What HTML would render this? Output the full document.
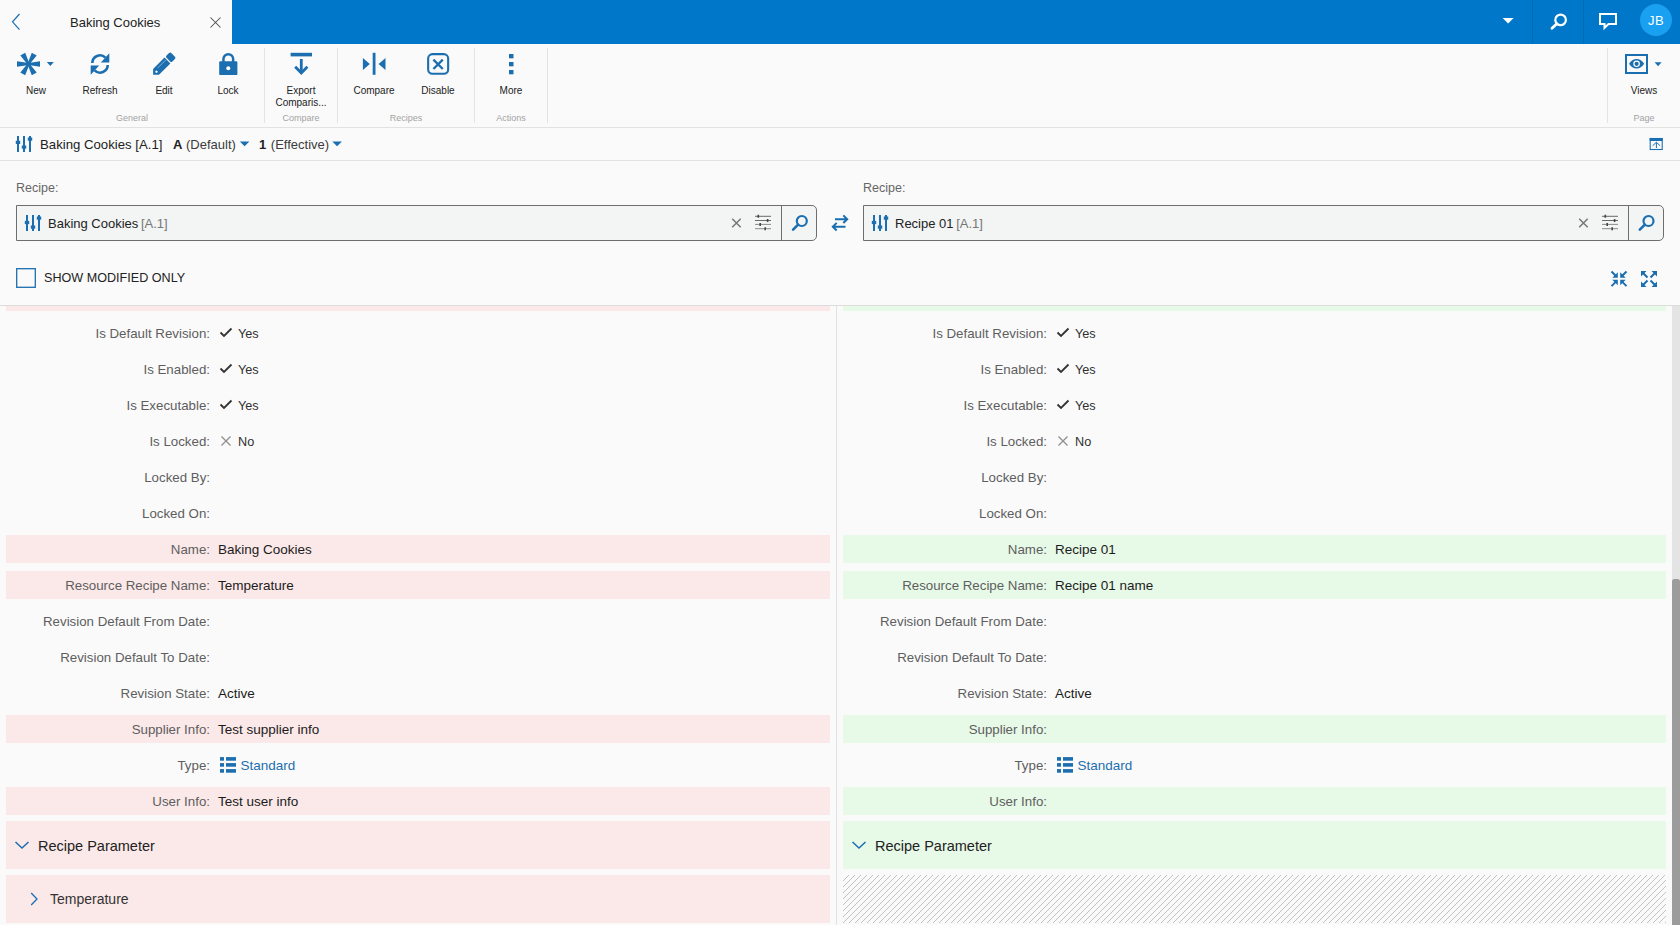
<!DOCTYPE html>
<html><head><meta charset="utf-8">
<style>
*{box-sizing:border-box;margin:0;padding:0}
html,body{width:1680px;height:925px;overflow:hidden;background:#fafafa;font-family:"Liberation Sans",sans-serif;color:#222}
.a{position:absolute}
.t{position:absolute;white-space:nowrap}
svg{position:absolute;overflow:visible}
#hdr{left:232px;top:0;width:1448px;height:44px;background:#0077c8}
.tbl{font-size:10px;color:#222;text-align:center;line-height:12px;padding-top:0.7px}
.grp{font-size:9px;color:#a3a3a3;text-align:center;line-height:10px;padding-top:1px}
.sep{width:1px;background:#e3e3e3;top:48px;height:75px}
.lbl{font-size:13.3px;color:#5e5e5e;text-align:right;line-height:16px;padding-top:0.7px}
.val{font-size:13.5px;color:#1c1c1c;line-height:16px}
.pink{background:#fbe8e8}
.green{background:#e7f9e7}
</style></head><body>

<!-- tab -->
<svg style="left:0;top:0" width="40" height="44"><path d="M19.5 14 L12.5 21.8 L19.5 29.6" fill="none" stroke="#1b6eb0" stroke-width="1.2"/></svg>
<div class="t" style="left:70px;top:14.5px;font-size:13px;line-height:16px;color:#222">Baking Cookies</div>
<svg style="left:0;top:0" width="232" height="44"><path d="M210.5 17.5 L220.5 27.5 M220.5 17.5 L210.5 27.5" fill="none" stroke="#4a4a4a" stroke-width="1.05"/></svg>

<!-- header -->
<div id="hdr" class="a"></div>
<div class="a" style="left:1532px;top:0;width:1px;height:44px;background:#006cb6"></div>
<div class="a" style="left:1583px;top:0;width:1px;height:44px;background:#006cb6"></div>
<svg style="left:0;top:0" width="1680" height="44">
 <path d="M1502.6 18 L1513.6 18 L1508.1 23.6 Z" fill="#fff"/>
 <circle cx="1560.6" cy="19.9" r="5.3" fill="none" stroke="#fff" stroke-width="2.2"/>
 <path d="M1556.8 23.7 L1552 28.3" stroke="#fff" stroke-width="2.8" stroke-linecap="round"/>
 <path d="M1600 14 H1616 V24 H1608.5 L1604.5 27.8 V24 H1600 Z" fill="none" stroke="#fff" stroke-width="2" stroke-linejoin="miter"/>
 <circle cx="1656" cy="20" r="16" fill="#1aa0f0"/>
</svg>
<div class="t" style="left:1640px;top:12.8px;width:32px;text-align:center;font-size:13px;letter-spacing:0.5px;line-height:16px;color:#fff">JB</div>

<!-- toolbar -->
<div class="a" style="left:0;top:127px;width:1680px;height:1px;background:#e2e2e2"></div>
<div class="a sep" style="left:264px"></div>
<div class="a sep" style="left:337px"></div>
<div class="a sep" style="left:474px"></div>
<div class="a sep" style="left:547px"></div>
<div class="a sep" style="left:1607px"></div>

<svg style="left:0;top:0" width="1680" height="128">
 <!-- asterisk -->
 <g transform="translate(28.5 64)" fill="#1b6eb0">
  <path id="arm" d="M0 -1 L11.5 -2.8 L11.5 2.8 L0 1 Z"/>
  <use href="#arm" transform="rotate(60)"/>
  <use href="#arm" transform="rotate(120)"/>
  <use href="#arm" transform="rotate(180)"/>
  <use href="#arm" transform="rotate(240)"/>
  <use href="#arm" transform="rotate(300)"/>
 </g>
 <path d="M46.8 62 L53.8 62 L50.3 66 Z" fill="#1b6eb0"/>
 <!-- refresh -->
 <g fill="none" stroke="#1b6eb0" stroke-width="2.6">
  <path d="M92.3 63 A7.7 7.7 0 0 1 105.4 57.6"/>
  <path d="M107.7 65 A7.7 7.7 0 0 1 94.6 70.4"/>
 </g>
 <path d="M109.3 53.2 L109.3 62.5 L100.8 62.5 Z" fill="#1b6eb0"/>
 <path d="M90.7 74.8 L90.7 65.5 L99.2 65.5 Z" fill="#1b6eb0"/>
 <!-- edit pencil -->
 <g transform="translate(153.1 74.85) rotate(-45)">
  <path d="M0 0 L4.15 -4.15 H20.3 V4.15 H4.15 Z" fill="#1b6eb0"/>
  <rect x="21.5" y="-4.15" width="6.8" height="8.3" rx="1.6" fill="#1b6eb0"/>
  <path d="M8 -1.6 H19.5" stroke="#fff" stroke-width="0.6" opacity="0.7"/>
  <circle cx="4.6" cy="0.2" r="1.2" fill="#fff"/>
 </g>
 <!-- lock -->
 <path d="M223.45 62 V59 A4.85 4.85 0 0 1 233.15 59 V62" fill="none" stroke="#1b6eb0" stroke-width="2.5"/>
 <rect x="219.2" y="61.2" width="18.2" height="13.9" rx="1.2" fill="#1b6eb0"/>
 <circle cx="228.3" cy="68.2" r="2" fill="#fff"/>
 <!-- export -->
 <rect x="290.6" y="52.8" width="21.4" height="3.6" fill="#1b6eb0"/>
 <path d="M301.3 59 V73" stroke="#1b6eb0" stroke-width="2.8"/>
 <path d="M295.2 66.8 L301.3 72.9 L307.4 66.8" fill="none" stroke="#1b6eb0" stroke-width="2.8"/>
 <!-- compare -->
 <path d="M362.9 58 L369.8 64 L362.9 70 Z" fill="#1b6eb0"/>
 <rect x="372.7" y="52.8" width="2.8" height="22" fill="#1b6eb0"/>
 <path d="M385.5 58 L378.6 64 L385.5 70 Z" fill="#1b6eb0"/>
 <!-- disable -->
 <rect x="428.15" y="54.15" width="20" height="19.6" rx="4.3" fill="none" stroke="#1b6eb0" stroke-width="2.1"/>
 <path d="M433.4 59.6 L442.8 69 M442.8 59.6 L433.4 69" stroke="#1b6eb0" stroke-width="2.3"/>
 <!-- more -->
 <rect x="509" y="54" width="4.5" height="4.3" fill="#1b6eb0"/>
 <rect x="509" y="62" width="4.5" height="4.3" fill="#1b6eb0"/>
 <rect x="509" y="70" width="4.5" height="4.3" fill="#1b6eb0"/>
 <!-- views -->
 <rect x="1626" y="55" width="21" height="18" fill="none" stroke="#1b6eb0" stroke-width="2"/>
 <path d="M1629.1 63.8 C1632.3 57.5 1640.9 57.5 1644.1 63.8 C1640.9 70.1 1632.3 70.1 1629.1 63.8 Z" fill="#1b6eb0"/>
 <circle cx="1636.6" cy="63.8" r="3.3" fill="#fff"/>
 <circle cx="1636.6" cy="63.8" r="2.1" fill="#1b6eb0"/>
 <path d="M1654.6 62.3 L1661.6 62.3 L1658.1 66.3 Z" fill="#1b6eb0"/>
</svg>

<div class="t tbl" style="left:16px;top:84px;width:40px">New</div>
<div class="t tbl" style="left:80px;top:84px;width:40px">Refresh</div>
<div class="t tbl" style="left:144px;top:84px;width:40px">Edit</div>
<div class="t tbl" style="left:208px;top:84px;width:40px">Lock</div>
<div class="t tbl" style="left:266px;top:84px;width:70px">Export<br>Comparis...</div>
<div class="t tbl" style="left:344px;top:84px;width:60px">Compare</div>
<div class="t tbl" style="left:408px;top:84px;width:60px">Disable</div>
<div class="t tbl" style="left:481px;top:84px;width:60px">More</div>
<div class="t tbl" style="left:1614px;top:84px;width:60px">Views</div>
<div class="t grp" style="left:82px;top:112px;width:100px">General</div>
<div class="t grp" style="left:266px;top:112px;width:70px">Compare</div>
<div class="t grp" style="left:356px;top:112px;width:100px">Recipes</div>
<div class="t grp" style="left:481px;top:112px;width:60px">Actions</div>
<div class="t grp" style="left:1614px;top:112px;width:60px">Page</div>

<!-- breadcrumb -->
<div class="a" style="left:0;top:160px;width:1680px;height:1px;background:#e2e2e2"></div>


<svg style="left:0;top:0" width="1680" height="305">
 <!-- breadcrumb recipe icon -->
 <g fill="#1b6eb0">
  <rect x="17" y="136" width="2" height="16"/><rect x="15.8" y="140.8" width="4.4" height="3.2"/>
  <rect x="23" y="136" width="2" height="16"/><rect x="21.8" y="145.5" width="4.4" height="3.2"/>
  <rect x="29" y="136" width="2" height="16"/><rect x="27.8" y="137.5" width="4.4" height="3.2"/>
 </g>
 <path d="M239.8 141.5 L249.4 141.5 L244.6 146.3 Z" fill="#1b6eb0"/>
 <path d="M332.3 141.5 L341.9 141.5 L337.1 146.3 Z" fill="#1b6eb0"/>
 <!-- panel toggle -->
 <rect x="1650.2" y="138.5" width="12" height="11" fill="none" stroke="#1b6eb0" stroke-width="1.1"/>
 <rect x="1649.7" y="138" width="13" height="3" fill="#1b6eb0"/>
 <path d="M1656.4 148 V142.5 M1652.6 145.8 L1656.4 142.2 L1660.2 145.8" fill="none" stroke="#1b6eb0" stroke-width="1"/>
</svg>
<div class="t" style="left:40px;top:137px;font-size:13.2px;line-height:16px;color:#222">Baking Cookies [A.1]</div>
<div class="t" style="left:173px;top:137px;font-size:13px;line-height:16px;color:#222"><b style="font-weight:600">A</b> <span style="color:#3c3c3c">(Default)</span></div>
<div class="t" style="left:259px;top:137px;font-size:13px;line-height:16px;color:#222"><b style="font-weight:600">1</b> <span style="color:#3c3c3c;margin-left:1px">(Effective)</span></div>

<!-- recipe selectors -->
<div class="t" style="left:16px;top:180px;font-size:12.5px;line-height:16px;color:#666">Recipe:</div>
<div class="t" style="left:863px;top:180px;font-size:12.5px;line-height:16px;color:#666">Recipe:</div>

<div class="a" style="left:16px;top:205px;width:801px;height:36px;border:1px solid #6e6e6e;border-radius:0 5px 5px 0;background:#f3f4f4"></div>
<div class="a" style="left:781px;top:206px;width:1px;height:34px;background:#6e6e6e"></div>
<div class="a" style="left:863px;top:205px;width:801px;height:36px;border:1px solid #6e6e6e;border-radius:0 5px 5px 0;background:#f3f4f4"></div>
<div class="a" style="left:1628px;top:206px;width:1px;height:34px;background:#6e6e6e"></div>
<div class="t" style="left:48px;top:216px;font-size:13px;line-height:16px;color:#222">Baking Cookies <span style="color:#777;margin-left:-1px">[A.1]</span></div>
<div class="t" style="left:895px;top:216px;font-size:13px;line-height:16px;color:#222">Recipe 01 <span style="color:#777;margin-left:-1px">[A.1]</span></div>

<svg style="left:0;top:0" width="1680" height="305">
 <defs>
  <g id="ricon" fill="#1b6eb0">
   <rect x="1" y="0" width="2" height="16"/><rect x="-0.2" y="5.9" width="4.4" height="3.2"/>
   <rect x="7" y="0" width="2" height="16"/><rect x="5.8" y="10.5" width="4.4" height="3.2"/>
   <rect x="13" y="0" width="2" height="16"/><rect x="11.8" y="1.5" width="4.4" height="3.2"/>
  </g>
  <g id="clr"><path d="M0.5 0.5 L9 9 M9 0.5 L0.5 9" stroke="#777" stroke-width="1.5"/></g>
  <g id="flt">
   <path d="M0 1.5 H16 M0 5.7 H16" stroke="#6a6a6a" stroke-width="1"/>
   <path d="M0 9.6 H16 M0 13.9 H16" stroke="#8c8c8c" stroke-width="1"/>
   <path d="M3.3 0 V3 M12.6 4.2 V7.2 M5.2 8.1 V11.1 M10.2 12.4 V15.4" stroke="#444" stroke-width="1.6"/>
  </g>
  <g id="srch" fill="none" stroke="#1b6eb0">
   <circle cx="10" cy="6" r="5" stroke-width="2.2"/>
   <path d="M6.3 9.7 L1.3 14.7" stroke-width="2.6" stroke-linecap="round"/>
  </g>
 </defs>
 <use href="#ricon" x="25" y="215"/>
 <use href="#ricon" x="872" y="215"/>
 <use href="#clr" x="731.7" y="218.3"/>
 <use href="#clr" x="1578.7" y="218.3"/>
 <use href="#flt" x="755" y="214.8"/>
 <use href="#flt" x="1602" y="214.8"/>
 <use href="#srch" x="791.8" y="215"/>
 <use href="#srch" x="1638.5" y="215"/>
 <!-- swap -->
 <g fill="none" stroke="#1b6eb0" stroke-width="2">
  <path d="M835 219.2 H847 M843.3 215.4 L847.2 219.2 L843.3 223"/>
  <path d="M845.5 226.7 H833 M836.7 222.9 L832.8 226.7 L836.7 230.5"/>
 </g>
 <!-- checkbox -->
 <rect x="16.7" y="268.7" width="18.6" height="18.6" fill="none" stroke="#1b6eb0" stroke-width="1.3"/>
 <!-- collapse / expand -->
 <g stroke="#1b6eb0" stroke-width="2" fill="none">
  <path d="M1611.5 271.5 L1616 276 M1626.5 271.5 L1622 276 M1611.5 286.1 L1616 281.6 M1626.5 286.1 L1622 281.6"/>
  <path d="M1643 273 L1647.5 277.5 M1655 273 L1650.5 277.5 M1643 285 L1647.5 280.5 M1655 285 L1650.5 280.5"/>
 </g>
 <g fill="#1b6eb0">
  <path d="M1617.8 272.3 V277.8 H1612.3 Z M1620.2 272.3 V277.8 H1625.7 Z M1617.8 285.3 V279.8 H1612.3 Z M1620.2 285.3 V279.8 H1625.7 Z"/>
  <path d="M1641 271 H1646.5 L1641 276.5 Z M1657 271 H1651.5 L1657 276.5 Z M1641 287 H1646.5 L1641 281.5 Z M1657 287 H1651.5 L1657 281.5 Z"/>
 </g>
</svg>
<div class="t" style="left:44px;top:270px;font-size:12.6px;line-height:16px;color:#222">SHOW MODIFIED ONLY</div>
<div class="a" style="left:0;top:305px;width:1680px;height:1px;background:#dcdcdc"></div>

<!-- scroll area -->
<div class="a" style="left:836px;top:306px;width:1px;height:619px;background:#e2e2e2"></div>
<div class="a" style="left:1672px;top:306px;width:8px;height:619px;background:#e4e4e4"></div>
<div class="a" style="left:1672px;top:579px;width:8px;height:346px;background:#9c9c9c;border-radius:2.5px 2.5px 0 0"></div>
<!--ROWS-->
<div class="a pink" style="left:6px;top:306px;width:824px;height:5px"></div>
<div class="a green" style="left:843px;top:306px;width:823px;height:5px"></div>
<div class="t lbl" style="right:1470px;top:325px">Is Default Revision:</div>
<div class="t val" style="left:238px;top:326px;font-size:12.7px;color:#303030">Yes</div>
<div class="t lbl" style="right:633px;top:325px">Is Default Revision:</div>
<div class="t val" style="left:1075px;top:326px;font-size:12.7px;color:#303030">Yes</div>
<div class="t lbl" style="right:1470px;top:361px">Is Enabled:</div>
<div class="t val" style="left:238px;top:362px;font-size:12.7px;color:#303030">Yes</div>
<div class="t lbl" style="right:633px;top:361px">Is Enabled:</div>
<div class="t val" style="left:1075px;top:362px;font-size:12.7px;color:#303030">Yes</div>
<div class="t lbl" style="right:1470px;top:397px">Is Executable:</div>
<div class="t val" style="left:238px;top:398px;font-size:12.7px;color:#303030">Yes</div>
<div class="t lbl" style="right:633px;top:397px">Is Executable:</div>
<div class="t val" style="left:1075px;top:398px;font-size:12.7px;color:#303030">Yes</div>
<div class="t lbl" style="right:1470px;top:433px">Is Locked:</div>
<div class="t val" style="left:238px;top:434px;font-size:12.7px;color:#303030">No</div>
<div class="t lbl" style="right:633px;top:433px">Is Locked:</div>
<div class="t val" style="left:1075px;top:434px;font-size:12.7px;color:#303030">No</div>
<div class="t lbl" style="right:1470px;top:469px">Locked By:</div>
<div class="t lbl" style="right:633px;top:469px">Locked By:</div>
<div class="t lbl" style="right:1470px;top:505px">Locked On:</div>
<div class="t lbl" style="right:633px;top:505px">Locked On:</div>
<div class="a pink" style="left:6px;top:535px;width:824px;height:28px"></div>
<div class="t lbl" style="right:1470px;top:541px">Name:</div>
<div class="t val" style="left:218px;top:542px">Baking Cookies</div>
<div class="a green" style="left:843px;top:535px;width:823px;height:28px"></div>
<div class="t lbl" style="right:633px;top:541px">Name:</div>
<div class="t val" style="left:1055px;top:542px">Recipe 01</div>
<div class="a pink" style="left:6px;top:571px;width:824px;height:28px"></div>
<div class="t lbl" style="right:1470px;top:577px">Resource Recipe Name:</div>
<div class="t val" style="left:218px;top:578px">Temperature</div>
<div class="a green" style="left:843px;top:571px;width:823px;height:28px"></div>
<div class="t lbl" style="right:633px;top:577px">Resource Recipe Name:</div>
<div class="t val" style="left:1055px;top:578px">Recipe 01 name</div>
<div class="t lbl" style="right:1470px;top:613px">Revision Default From Date:</div>
<div class="t lbl" style="right:633px;top:613px">Revision Default From Date:</div>
<div class="t lbl" style="right:1470px;top:649px">Revision Default To Date:</div>
<div class="t lbl" style="right:633px;top:649px">Revision Default To Date:</div>
<div class="t lbl" style="right:1470px;top:685px">Revision State:</div>
<div class="t val" style="left:218px;top:686px">Active</div>
<div class="t lbl" style="right:633px;top:685px">Revision State:</div>
<div class="t val" style="left:1055px;top:686px">Active</div>
<div class="a pink" style="left:6px;top:715px;width:824px;height:28px"></div>
<div class="t lbl" style="right:1470px;top:721px">Supplier Info:</div>
<div class="t val" style="left:218px;top:722px">Test supplier info</div>
<div class="a green" style="left:843px;top:715px;width:823px;height:28px"></div>
<div class="t lbl" style="right:633px;top:721px">Supplier Info:</div>
<div class="t lbl" style="right:1470px;top:757px">Type:</div>
<div class="t val" style="left:240.5px;top:758px;color:#1b6eb0">Standard</div>
<div class="t lbl" style="right:633px;top:757px">Type:</div>
<div class="t val" style="left:1077.5px;top:758px;color:#1b6eb0">Standard</div>
<div class="a pink" style="left:6px;top:787px;width:824px;height:28px"></div>
<div class="t lbl" style="right:1470px;top:793px">User Info:</div>
<div class="t val" style="left:218px;top:794px">Test user info</div>
<div class="a green" style="left:843px;top:787px;width:823px;height:28px"></div>
<div class="t lbl" style="right:633px;top:793px">User Info:</div>
<div class="a pink" style="left:6px;top:821px;width:824px;height:48px"></div>
<div class="a green" style="left:843px;top:821px;width:823px;height:48px"></div>
<div class="t" style="left:38px;top:837px;font-size:14.5px;line-height:18px;color:#222">Recipe Parameter</div>
<div class="t" style="left:875px;top:837px;font-size:14.5px;line-height:18px;color:#222">Recipe Parameter</div>
<div class="a pink" style="left:6px;top:875px;width:824px;height:48px"></div>
<svg style="left:843px;top:875px" width="823" height="48"><defs><pattern id="hp" patternUnits="userSpaceOnUse" width="6" height="6"><path d="M-1 7 L7 -1" stroke="#c2c2c2" stroke-width="1"/></pattern></defs><rect width="823" height="48" fill="url(#hp)"/></svg>
<div class="t" style="left:50px;top:891px;font-size:14px;line-height:16px;color:#333">Temperature</div>
<svg style="left:0;top:0" width="1680" height="925"><path d="M220.5 332.5 L224 336 L231.5 328.5" fill="none" stroke="#333" stroke-width="1.8"/><path d="M1057.5 332.5 L1061 336 L1068.5 328.5" fill="none" stroke="#333" stroke-width="1.8"/><path d="M220.5 368.5 L224 372 L231.5 364.5" fill="none" stroke="#333" stroke-width="1.8"/><path d="M1057.5 368.5 L1061 372 L1068.5 364.5" fill="none" stroke="#333" stroke-width="1.8"/><path d="M220.5 404.5 L224 408 L231.5 400.5" fill="none" stroke="#333" stroke-width="1.8"/><path d="M1057.5 404.5 L1061 408 L1068.5 400.5" fill="none" stroke="#333" stroke-width="1.8"/><path d="M221.5 436.5 L230.5 445.5 M230.5 436.5 L221.5 445.5" fill="none" stroke="#8f8f8f" stroke-width="1.3"/><path d="M1058.5 436.5 L1067.5 445.5 M1067.5 436.5 L1058.5 445.5" fill="none" stroke="#8f8f8f" stroke-width="1.3"/><g fill="#1b6eb0"><rect x="220" y="757.1" width="4" height="3.6"/><rect x="226" y="757.1" width="10" height="3.6"/><rect x="220" y="763.1" width="4" height="3.6"/><rect x="226" y="763.1" width="10" height="3.6"/><rect x="220" y="769.1" width="4" height="3.6"/><rect x="226" y="769.1" width="10" height="3.6"/></g><g fill="#1b6eb0"><rect x="1057" y="757.1" width="4" height="3.6"/><rect x="1063" y="757.1" width="10" height="3.6"/><rect x="1057" y="763.1" width="4" height="3.6"/><rect x="1063" y="763.1" width="10" height="3.6"/><rect x="1057" y="769.1" width="4" height="3.6"/><rect x="1063" y="769.1" width="10" height="3.6"/></g><path d="M15.5 842 L22 848 L28.5 842" fill="none" stroke="#1b6eb0" stroke-width="1.5"/><path d="M852.5 842 L859 848 L865.5 842" fill="none" stroke="#1b6eb0" stroke-width="1.5"/><path d="M31.2 893 L37 899 L31.2 905" fill="none" stroke="#1b6eb0" stroke-width="1.3"/></svg>
<!--/ROWS--><!--/ROWS--><!--/ROWS--><!--/ROWS--><!--/ROWS--><!--/ROWS--><!--/ROWS-->
</body></html>
